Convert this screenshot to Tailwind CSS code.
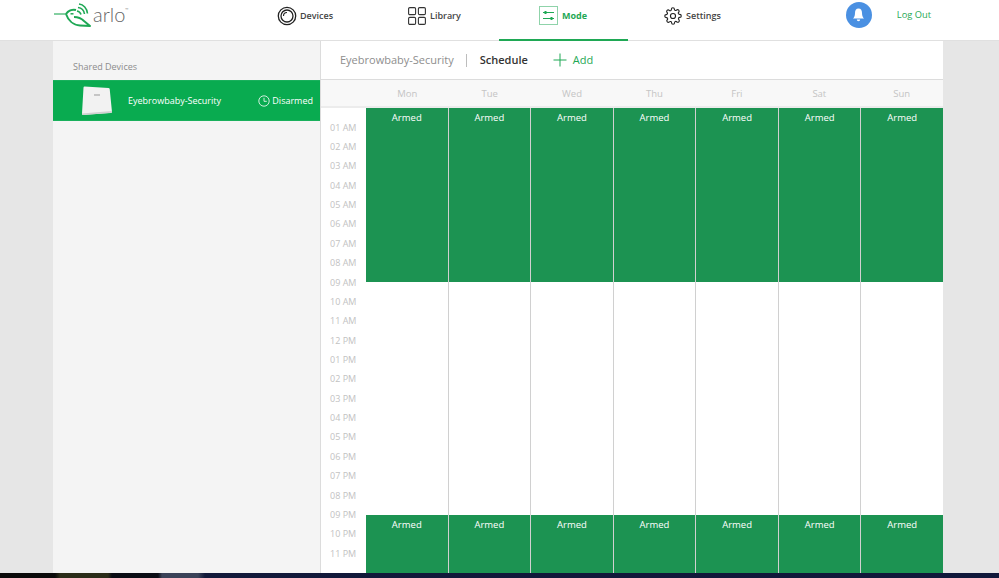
<!DOCTYPE html>
<html>
<head>
<meta charset="utf-8">
<script src="https://cdn.jsdelivr.net/npm/@tailwindcss/browser@4"></script>
</head>
<body class="m-0">
<div class="w-[999px] h-[578px] overflow-hidden flex flex-col bg-[#e6e6e6] font-['Open_Sans',sans-serif]">
  <!-- top nav -->
  <header class="h-[41px] shrink-0 bg-white border-b border-[#e0e0e0] flex relative">
    <div class="w-[277px] shrink-0 pl-[54px] flex items-start">
      <svg width="40" height="28" viewBox="0 0 40 28" fill="none" class="shrink-0">
        <path d="M0 14 C5 14 9 14 12 14" stroke="#1fa855" stroke-width="1.1"/>
        <path d="M12 14 C14 11 18 9 22 10 M12 14 C14 20 19 25 26 25.5 L36 26 L30 21 C28 19 25 17 20 17" stroke="#1fa855" stroke-width="2" stroke-linejoin="round"/>
        <path d="M16.5 13.8 H19.5" stroke="#1fa855" stroke-width="1.5"/>
        <path d="M23 11 C25 11.5 26.5 12.5 27 14.5 M24 7.5 C28 8 30 10.5 30.5 14 M25 4 C29.5 4.5 33 8.5 33.5 13.5" stroke="#1fa855" stroke-width="1.6"/>
      </svg>
      <span class="-ml-[1px] mt-[1px] text-[20px] leading-[26px] font-light text-[#666] font-['Lato',sans-serif]">arlo</span>
      <span class="text-[4px] leading-[6px] mt-[7px] text-[#888]">™</span>
    </div>
    <nav class="flex items-start text-[#444] text-[9px] font-semibold">
      <div class="flex items-center h-[31px] w-[222px]">
        <svg width="20" height="20" viewBox="0 0 20 20" fill="none" stroke="#222">
          <circle cx="10" cy="10" r="8.7" stroke-width="1.3"/>
          <circle cx="10" cy="10" r="6" stroke-width="1.3"/>
          <path d="M6.5 10 A3.5 3.5 0 0 1 10 6.5" stroke-width="1.1"/>
        </svg>
        <span class="ml-[3px]">Devices</span>
      </div>
      <div class="w-[129px] flex items-center h-[31px] -ml-[91px]">
        <svg width="18" height="18" viewBox="0 0 18 18" fill="none" stroke="#333" stroke-width="1.1">
          <rect x="0.6" y="0.6" width="7" height="7" rx="1.2"/>
          <rect x="10.4" y="0.6" width="7" height="7" rx="1.2"/>
          <rect x="0.6" y="10.4" width="7" height="7" rx="1.2"/>
          <rect x="10.4" y="10.4" width="7" height="7" rx="1.2"/>
        </svg>
        <span class="ml-[4px]">Library</span>
      </div>
      <div class="w-[129px] h-[41px] -ml-[38px] border-b-2 border-[#1fa855] flex items-start pl-[40px] pt-[6px] text-[#1fa855] font-bold">
        <svg width="19" height="19" viewBox="0 0 19 19" fill="none" stroke="#1fa855" class="shrink-0">
          <rect x="0.5" y="0.5" width="18" height="18" stroke="#8fd3aa"/>
          <path d="M4 6.5 H15 M4 12.5 H15" stroke-width="1"/>
          <path d="M6.5 5 V8 M12.5 11 V14" stroke-width="2"/>
        </svg>
        <span class="ml-[4px] mt-[3px]">Mode</span>
      </div>
      <div class="flex items-center h-[31px] ml-[36px]">
        <svg width="18" height="18" viewBox="0 0 24 24" fill="none" stroke="#222" stroke-width="1.5">
          <circle cx="12" cy="12" r="3.4"/>
          <path d="M19.4 15a1.65 1.65 0 0 0 .33 1.82l.06.06a2 2 0 1 1-2.83 2.83l-.06-.06a1.65 1.65 0 0 0-2.82 1.17V21a2 2 0 1 1-4 0v-.09a1.65 1.65 0 0 0-2.82-1.11l-.06.06a2 2 0 1 1-2.83-2.83l.06-.06a1.65 1.65 0 0 0-1.17-2.82H3a2 2 0 1 1 0-4h.09A1.65 1.65 0 0 0 4.2 7.33l-.06-.06a2 2 0 1 1 2.83-2.83l.06.06a1.65 1.65 0 0 0 2.82-1.17V3a2 2 0 1 1 4 0v.09a1.65 1.65 0 0 0 2.82 1.11l.06-.06a2 2 0 1 1 2.83 2.83l-.06.06a1.65 1.65 0 0 0 1.17 2.82H21a2 2 0 1 1 0 4h-.09a1.65 1.65 0 0 0-1.51 1.15z"/>
        </svg>
        <span class="ml-[4px]">Settings</span>
      </div>
    </nav>
    <div class="ml-auto flex items-start pt-[2px] pr-[68px]">
      <div class="w-[26px] h-[26px] rounded-full bg-[#4a90e2] flex items-center justify-center">
        <svg width="13" height="14" viewBox="0 0 13 14" fill="#fff">
          <path d="M6.5 0.5 C9 0.5 10 2.5 10 5 C10 8 11 9.5 12 10.5 H1 C2 9.5 3 8 3 5 C3 2.5 4 0.5 6.5 0.5 Z"/>
          <path d="M4.8 11.5 H8.2 A1.7 1.7 0 0 1 4.8 11.5 Z"/>
        </svg>
      </div>
      <a class="ml-[25px] mt-[6px] text-[9.3px] leading-[14px] text-[#1fa855] font-medium">Log Out</a>
    </div>
  </header>

  <!-- main -->
  <main class="flex-1 min-h-0 flex pl-[53px] pr-[56px]">
    <aside class="w-[268px] shrink-0 bg-[#f4f4f4] border-r border-[#dcdcdc] flex flex-col">
      <div class="h-[39px] pl-[20px] pt-[19px] text-[9px] leading-[14px] text-[#8c8c8c]">Shared Devices</div>
      <div class="h-[41px] bg-[#09ab50] border-y border-[#19b05c] flex items-center text-white text-[9px] font-medium whitespace-nowrap pr-[7px]">
        <svg width="30" height="29" viewBox="0 0 30 29" class="ml-[29px] shrink-0">
          <path d="M2.5 0.5 L26.5 2 Q27.5 2.2 27.7 3 L30 26 Q29.8 27 28.5 27 L1 29 Q0 29 0 27.5 L1.5 1.5 Q1.6 0.5 2.5 0.5 Z" fill="#f2f2f2"/>
          <path d="M0 27.5 L30 25 L29.8 26.8 L1 29 Q0 29 0 27.5 Z" fill="#d0d0d0"/>
          <path d="M12 9 H18" stroke="#999" stroke-width="1"/>
        </svg>
        <span class="ml-[16px]">Eyebrowbaby-Security</span>
        <svg width="12" height="12" viewBox="0 0 12 12" fill="none" stroke="#fff" stroke-width="0.8" class="ml-auto shrink-0">
          <circle cx="6" cy="6" r="5.2"/>
          <path d="M6 2.8 V6.3 H8.8"/>
        </svg>
        <span class="ml-[2px]">Disarmed</span>
      </div>
    </aside>
    <section class="flex-1 min-w-0 bg-white flex flex-col">
      <div class="h-[39px] shrink-0 border-b border-[#dcdcdc] flex items-center pl-[19px] text-[11px]">
        <span class="text-[#8e8e8e]">Eyebrowbaby-Security</span>
        <span class="w-px h-[13px] bg-[#bdbdbd] ml-[12px]"></span>
        <span class="ml-[13px] font-semibold text-[#333]">Schedule</span>
        <svg width="14" height="14" viewBox="0 0 14 14" stroke="#1fa855" stroke-width="1" class="ml-[25px]"><path d="M7 0.5 V13.5 M0.5 7 H13.5"/></svg>
        <span class="ml-[6px] text-[#1fa855]">Add</span>
      </div>
      <div class="h-[28px] shrink-0 bg-[#f8f8f8] border-b-2 border-[#ececec] flex pl-[45px] text-[9.5px] leading-[28px] text-[#c4c4c4] text-center">
        <div class="flex-1">Mon</div><div class="flex-1">Tue</div><div class="flex-1">Wed</div><div class="flex-1">Thu</div><div class="flex-1">Fri</div><div class="flex-1">Sat</div><div class="flex-1">Sun</div>
      </div>
      <div class="flex-1 min-h-0 flex">
        <div class="w-[45px] shrink-0 pt-[9.7px] pl-[9px] text-[9px] leading-[19.36px] text-[#c2c2c2] whitespace-nowrap">
          <div>01 AM</div><div>02 AM</div><div>03 AM</div><div>04 AM</div><div>05 AM</div><div>06 AM</div><div>07 AM</div><div>08 AM</div><div>09 AM</div><div>10 AM</div><div>11 AM</div><div>12 PM</div><div>01 PM</div><div>02 PM</div><div>03 PM</div><div>04 PM</div><div>05 PM</div><div>06 PM</div><div>07 PM</div><div>08 PM</div><div>09 PM</div><div>10 PM</div><div>11 PM</div>
        </div>
        <div class="flex-1 flex text-white text-[9.5px] leading-[19px] text-center">
          <div class="flex-1 flex flex-col border-r border-[#d0d0d0]"><div class="h-[174px] bg-[#1c9352]">Armed</div><div class="flex-1"></div><div class="h-[58px] bg-[#1c9352]">Armed</div></div>
          <div class="flex-1 flex flex-col border-r border-[#d0d0d0]"><div class="h-[174px] bg-[#1c9352]">Armed</div><div class="flex-1"></div><div class="h-[58px] bg-[#1c9352]">Armed</div></div>
          <div class="flex-1 flex flex-col border-r border-[#d0d0d0]"><div class="h-[174px] bg-[#1c9352]">Armed</div><div class="flex-1"></div><div class="h-[58px] bg-[#1c9352]">Armed</div></div>
          <div class="flex-1 flex flex-col border-r border-[#d0d0d0]"><div class="h-[174px] bg-[#1c9352]">Armed</div><div class="flex-1"></div><div class="h-[58px] bg-[#1c9352]">Armed</div></div>
          <div class="flex-1 flex flex-col border-r border-[#d0d0d0]"><div class="h-[174px] bg-[#1c9352]">Armed</div><div class="flex-1"></div><div class="h-[58px] bg-[#1c9352]">Armed</div></div>
          <div class="flex-1 flex flex-col border-r border-[#d0d0d0]"><div class="h-[174px] bg-[#1c9352]">Armed</div><div class="flex-1"></div><div class="h-[58px] bg-[#1c9352]">Armed</div></div>
          <div class="flex-1 flex flex-col"><div class="h-[174px] bg-[#1c9352]">Armed</div><div class="flex-1"></div><div class="h-[58px] bg-[#1c9352]">Armed</div></div>
        </div>
      </div>
    </section>
  </main>
  <div class="h-[5px] shrink-0 bg-[linear-gradient(90deg,#0a0a0a_0,#0a0a0a_55px,#2a2c18_60px,#2a2c18_108px,#0a0c14_112px,#0a0c14_158px,#3a4258_162px,#3a4258_198px,#12193a_205px,#10183a_100%)]"></div>
</div>
</body>
</html>
